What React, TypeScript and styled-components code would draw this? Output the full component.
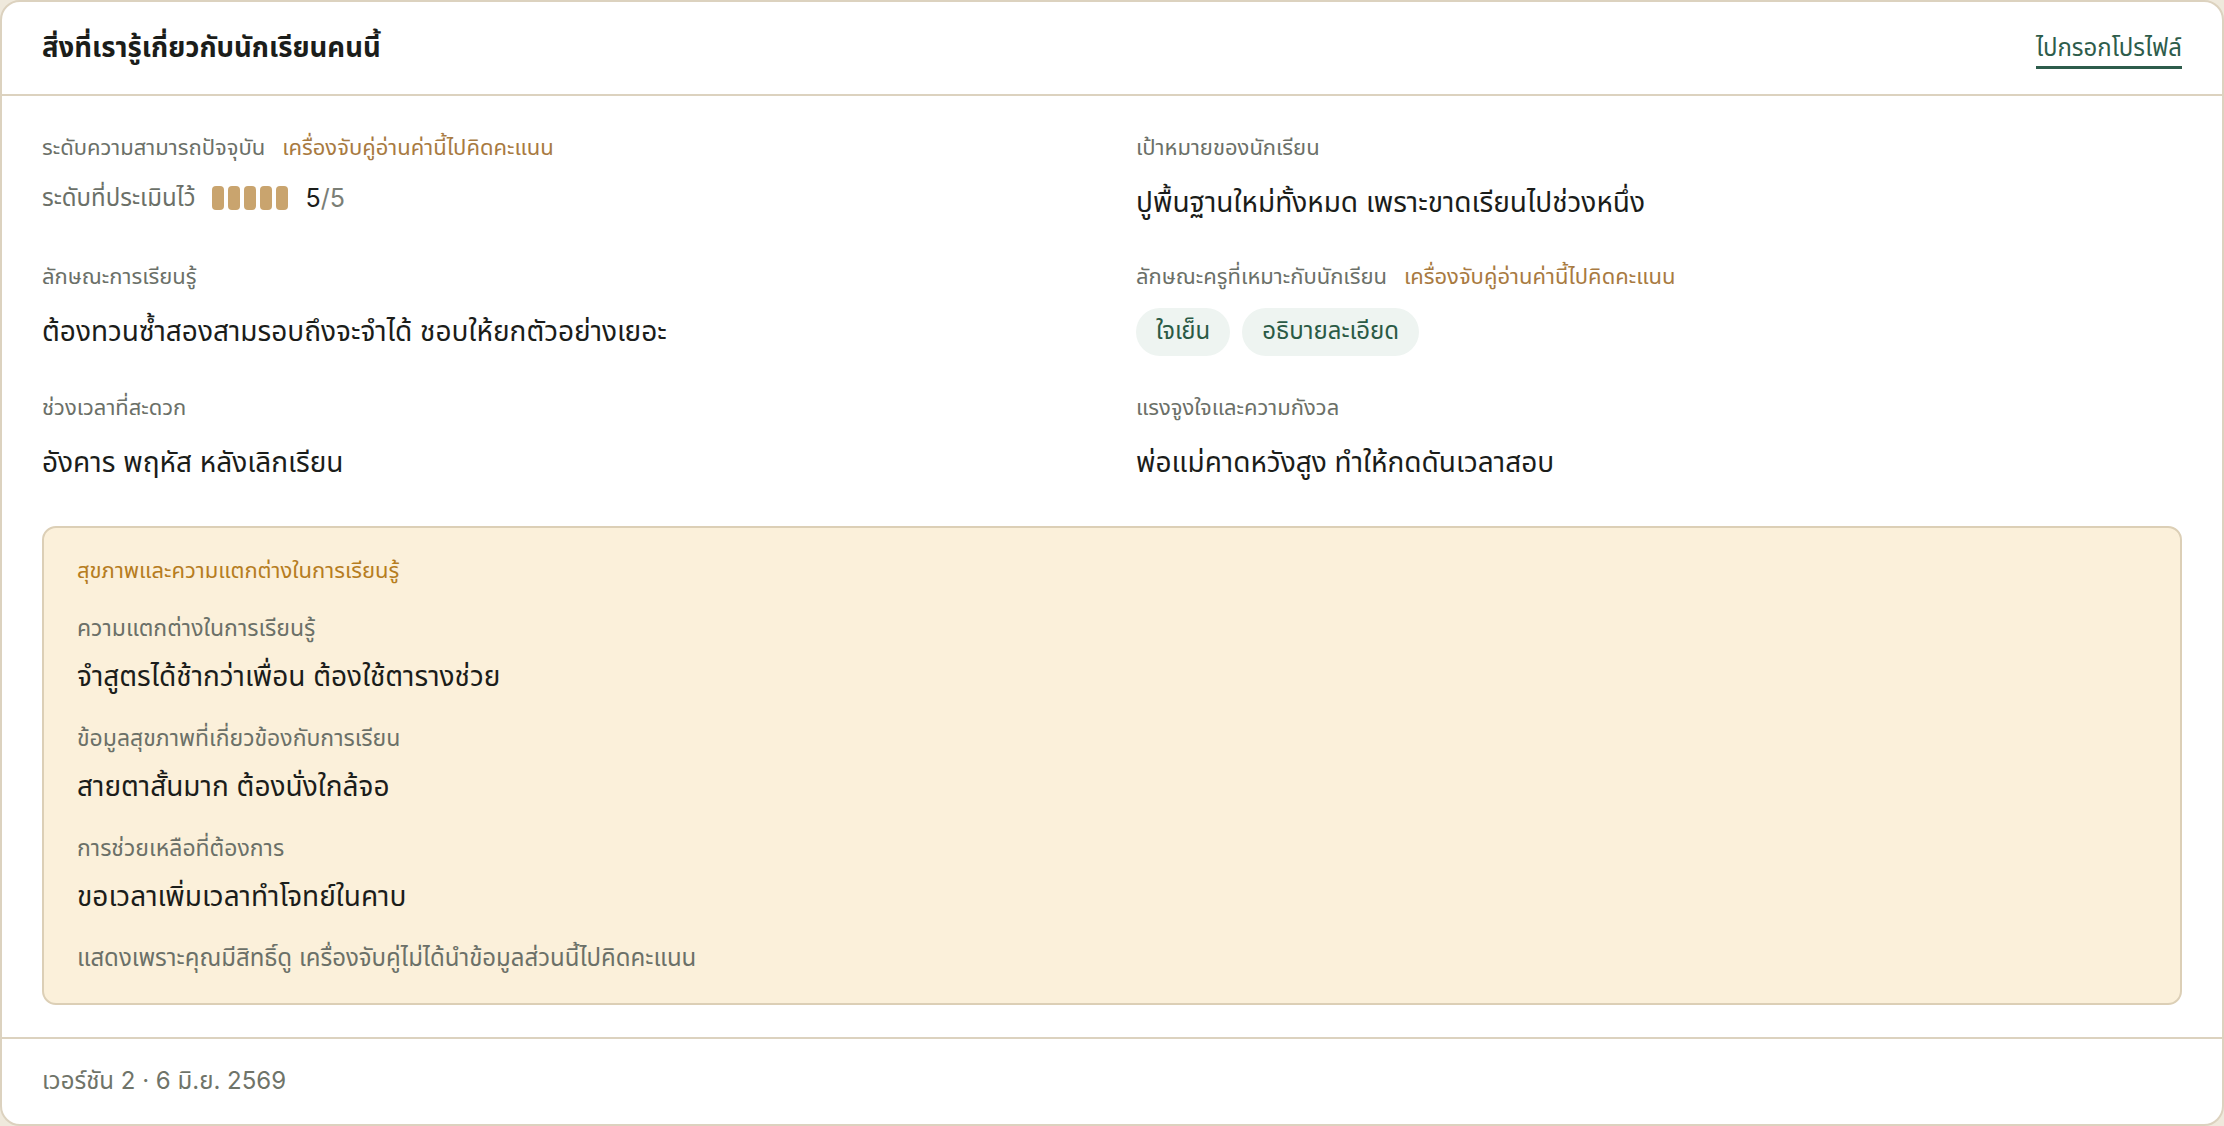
import styled, { createGlobalStyle } from "styled-components";

const GlobalStyle = createGlobalStyle`
  html, body {
    margin: 0;
    padding: 0;
    background: #efe9dc;
  }
  body {
    font-family: Inter, "Noto Sans Thai", "Noto Sans Thai UI", "Noto Sans", sans-serif;
    color: #1d1f1c;
  }
  * {
    box-sizing: border-box;
  }
`;

const Card = styled.section`
  width: 2224px;
  height: 1126px;
  background: #ffffff;
  border: 2px solid #dcd2bf;
  border-radius: 20px;
  display: flex;
  flex-direction: column;
  overflow: hidden;
`;

const Header = styled.header`
  flex-shrink: 0;
  height: 94px;
  padding: 0 40px;
  display: flex;
  align-items: center;
  justify-content: space-between;
  border-bottom: 2px solid #dcd2bf;
`;

const Title = styled.h2`
  margin: 0;
  font-size: 27.5px;
  font-weight: 700;
  color: #1b1d1a;
`;

const ProfileLink = styled.a`
  font-size: 24px;
  color: #2d5c4b;
  text-decoration: none;
  border-bottom: 3px solid #2d5c4b;
  padding-bottom: 2px;
  line-height: 32px;
  margin-top: 4px;
  cursor: pointer;
`;

const Body = styled.div`
  flex-shrink: 0;
  padding: 36px 40px 32px;
  display: flex;
  flex-direction: column;
`;

const Grid = styled.div`
  display: grid;
  grid-template-columns: 1fr 1fr;
  column-gap: 48px;
  row-gap: 40px;
`;

const Field = styled.div<{ $gap?: number }>`
  display: flex;
  flex-direction: column;
  gap: ${({ $gap }) => $gap ?? 21}px;
`;

const LabelRow = styled.div`
  display: flex;
  align-items: center;
  gap: 17px;
`;

const Label = styled.span<{ $size?: number }>`
  font-size: ${({ $size }) => $size ?? 22}px;
  line-height: 30px;
  color: #6b7068;
`;

const MatchTag = styled.span`
  font-size: 22px;
  line-height: 30px;
  color: #a87a41;
`;

const Value = styled.div`
  font-size: 28px;
  line-height: 38px;
  color: #1b1d1a;
`;

const RatingRow = styled.div`
  display: flex;
  align-items: center;
  gap: 17px;
  height: 30px;
`;

const Pills = styled.div`
  display: flex;
  gap: 4px;
`;

const Pill = styled.span<{ $on: boolean }>`
  width: 12px;
  height: 24px;
  border-radius: 4px;
  background: ${({ $on }) => ($on ? "#c9a46e" : "#ece4d4")};
`;

const Score = styled.span`
  font-size: 25px;
  color: #1b1d1a;
  em {
    font-style: normal;
    color: #7a7e76;
  }
`;

const Chips = styled.div`
  display: flex;
  gap: 12px;
  margin-bottom: -4px;
`;

const Chip = styled.span`
  height: 48px;
  padding: 0 20px;
  border-radius: 24px;
  background: #eef4f1;
  color: #2a5a45;
  font-size: 24px;
  display: flex;
  align-items: center;
`;

const HealthBox = styled.div`
  margin-top: 45px;
  background: #fbf0da;
  border: 2px solid #dccfb6;
  border-radius: 14px;
  padding: 27px 33px 30px;
  display: flex;
  flex-direction: column;
  gap: 28px;
`;

const HealthTitle = styled.div`
  font-size: 22px;
  line-height: 30px;
  color: #b67d1f;
`;

const HealthLabel = styled.div`
  font-size: 23px;
  line-height: 30px;
  color: #6b7068;
`;

const Note = styled.div`
  font-size: 24px;
  line-height: 30px;
  color: #6b7068;
`;

const Footer = styled.footer`
  flex: 1;
  border-top: 2px solid #dcd2bf;
  padding: 0 40px;
  display: flex;
  align-items: center;
  font-size: 24px;
  color: #6f7469;
`;

const MATCH = "เครื่องจับคู่อ่านค่านี้ไปคิดคะแนน";

const health = [
  { label: "ความแตกต่างในการเรียนรู้", value: "จำสูตรได้ช้ากว่าเพื่อน ต้องใช้ตารางช่วย" },
  { label: "ข้อมูลสุขภาพที่เกี่ยวข้องกับการเรียน", value: "สายตาสั้นมาก ต้องนั่งใกล้จอ" },
  { label: "การช่วยเหลือที่ต้องการ", value: "ขอเวลาเพิ่มเวลาทำโจทย์ในคาบ" },
];

export default function App() {
  const level = 5;
  return (
    <>
      <GlobalStyle />
      <Card>
        <Header>
          <Title>สิ่งที่เรารู้เกี่ยวกับนักเรียนคนนี้</Title>
          <ProfileLink>ไปกรอกโปรไฟล์</ProfileLink>
        </Header>
        <Body>
          <Grid>
            <Field>
              <LabelRow>
                <Label>ระดับความสามารถปัจจุบัน</Label>
                <MatchTag>{MATCH}</MatchTag>
              </LabelRow>
              <RatingRow>
                <Label $size={24}>ระดับที่ประเมินไว้</Label>
                <Pills>
                  {[1, 2, 3, 4, 5].map((i) => (
                    <Pill key={i} $on={i <= level} />
                  ))}
                </Pills>
                <Score>
                  {level}
                  <em>/5</em>
                </Score>
              </RatingRow>
            </Field>
            <Field>
              <Label>เป้าหมายของนักเรียน</Label>
              <Value>ปูพื้นฐานใหม่ทั้งหมด เพราะขาดเรียนไปช่วงหนึ่ง</Value>
            </Field>
            <Field>
              <Label>ลักษณะการเรียนรู้</Label>
              <Value>ต้องทวนซ้ำสองสามรอบถึงจะจำได้ ชอบให้ยกตัวอย่างเยอะ</Value>
            </Field>
            <Field $gap={17}>
              <LabelRow>
                <Label>ลักษณะครูที่เหมาะกับนักเรียน</Label>
                <MatchTag>{MATCH}</MatchTag>
              </LabelRow>
              <Chips>
                <Chip>ใจเย็น</Chip>
                <Chip>อธิบายละเอียด</Chip>
              </Chips>
            </Field>
            <Field>
              <Label>ช่วงเวลาที่สะดวก</Label>
              <Value>อังคาร พฤหัส หลังเลิกเรียน</Value>
            </Field>
            <Field>
              <Label>แรงจูงใจและความกังวล</Label>
              <Value>พ่อแม่คาดหวังสูง ทำให้กดดันเวลาสอบ</Value>
            </Field>
          </Grid>
          <HealthBox>
            <HealthTitle>สุขภาพและความแตกต่างในการเรียนรู้</HealthTitle>
            {health.map((h) => (
              <Field key={h.label} $gap={14}>
                <HealthLabel>{h.label}</HealthLabel>
                <Value>{h.value}</Value>
              </Field>
            ))}
            <Note>แสดงเพราะคุณมีสิทธิ์ดู เครื่องจับคู่ไม่ได้นำข้อมูลส่วนนี้ไปคิดคะแนน</Note>
          </HealthBox>
        </Body>
        <Footer>เวอร์ชัน 2 · 6 มิ.ย. 2569</Footer>
      </Card>
    </>
  );
}
